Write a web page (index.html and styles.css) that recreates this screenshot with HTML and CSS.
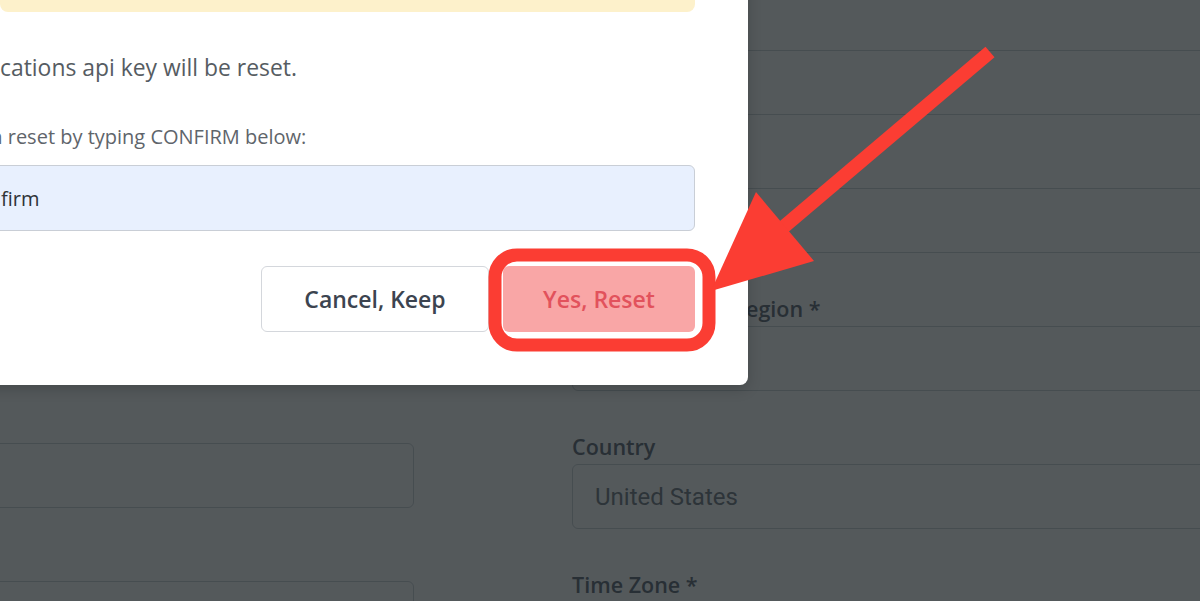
FILE: index.html
```html
<!DOCTYPE html>
<html lang="en">
<head>
<meta charset="utf-8">
<title>Reset API key</title>
<link rel="stylesheet" href="styles.css">
</head>
<body>
<div class="form">
  <div class="col col-left">
    <div class="field"><div class="label">Company</div><div class="input"></div></div>
    <div class="field"><div class="label">Email</div><div class="input"></div></div>
    <div class="field"><div class="label">Phone</div><div class="input"></div></div>
    <div class="field"><div class="label">Website</div><div class="input"></div></div>
    <div class="field"><div class="label">Notes</div><div class="input"></div></div>
  </div>
  <div class="col col-right">
    <div class="field"><div class="label">Address *</div><div class="input"></div></div>
    <div class="field"><div class="label">City *</div><div class="input"></div></div>
    <div class="field"><div class="label">State/Province/Region *</div><div class="input"></div></div>
    <div class="field"><div class="label">Country</div><div class="input">United States</div></div>
    <div class="field"><div class="label">Time Zone *</div><div class="input"></div></div>
  </div>
</div>

<div class="overlay"></div>

<div class="modal">
  <div class="alert"></div>
  <p class="msg">cations api key will be reset.</p>
  <p class="hint">m reset by typing CONFIRM below:</p>
  <div class="confirm-input">firm</div>
  <div class="actions">
    <button class="btn btn-cancel">Cancel, Keep</button>
    <button class="btn btn-reset">Yes, Reset</button>
  </div>
</div>

<svg class="annotation" width="1200" height="601" viewBox="0 0 1200 601">
  <rect x="495" y="255" width="214" height="90" rx="22" ry="22" fill="none" stroke="#fb3d33" stroke-width="13"/>
  <line x1="990" y1="52" x2="780" y2="230" stroke="#fb3d33" stroke-width="14" stroke-linecap="butt"/>
  <polygon points="756,192 814,261 711,291" fill="#fb3d33"/>
</svg>
</body>
</html>
```
FILE: styles.css
```css
html, body {
  margin: 0;
  padding: 0;
}
body {
  width: 1200px;
  height: 601px;
  overflow: hidden;
  position: relative;
  background: #ffffff;
  font-family: "Open Sans", "Liberation Sans", sans-serif;
}

/* background form */
.form {
  display: flex;
  margin-left: -186px;
  width: 1600px;
}
.col {
  display: flex;
  flex-direction: column;
  flex-shrink: 0;
}
.col-left {
  width: 600px;
  padding-top: 0;
}
.col-right {
  width: 700px;
  margin-left: 158px;
  padding-top: 21px;
}
.field {
  display: flex;
  flex-direction: column;
  margin-bottom: 44px;
}
.label {
  height: 24px;
  line-height: 24px;
  font-size: 21.5px;
  font-weight: 600;
  color: #6b7280;
  margin-bottom: 5px;
  white-space: nowrap;
}
.input {
  box-sizing: border-box;
  height: 65px;
  border: 1px solid #d1d5db;
  border-radius: 6px;
  padding: 0 22px;
  display: flex;
  align-items: center;
  font-family: Roboto, "Liberation Sans", sans-serif;
  font-size: 24px;
  color: #7d848c;
  background: #fff;
}

.overlay {
  position: absolute;
  inset: 0;
  background: rgba(11, 18, 22, 0.7);
}

/* modal */
.modal {
  position: absolute;
  left: -60px;
  top: -80px;
  width: 808px;
  box-sizing: border-box;
  padding: 20px 53px 53px 60px;
  background: #ffffff;
  border-radius: 8px;
  box-shadow: 0 4px 14px rgba(0, 0, 0, 0.18);
}
.alert {
  height: 72px;
  background: #fdf1cb;
  border-radius: 8px;
}
.msg {
  margin: 42px 0 0 0;
  height: 28px;
  line-height: 28px;
  font-size: 22.9px;
  color: #565c62;
  white-space: nowrap;
}
.hint {
  margin: 43px 0 0 0;
  height: 24px;
  line-height: 24px;
  font-size: 20px;
  color: #5f656b;
  white-space: nowrap;
  text-indent: -16px;
}
.confirm-input {
  margin: 16px 0 0 -20px;
  height: 66px;
  box-sizing: border-box;
  padding-left: 20px;
  display: flex;
  align-items: center;
  background: #e8f0fe;
  border: 1px solid #c9ced6;
  border-radius: 6px;
  font-size: 20px;
  color: #2f3338;
}
.actions {
  margin-top: 35px;
  display: flex;
  justify-content: flex-end;
  gap: 14px;
}
.btn {
  height: 66px;
  box-sizing: border-box;
  border-radius: 6px;
  font-family: "Open Sans", "Liberation Sans", sans-serif;
  font-size: 23px;
  font-weight: 600;
  cursor: pointer;
}
.btn-cancel {
  width: 228px;
  background: #ffffff;
  border: 1px solid #d4d7dc;
  color: #3c4450;
}
.btn-reset {
  width: 192px;
  background: #f9a6a6;
  border: none;
  color: #e2525c;
  box-shadow: 0 0 0 2px #ffffff;
}

.annotation {
  position: absolute;
  left: 0;
  top: 0;
  pointer-events: none;
}
```
